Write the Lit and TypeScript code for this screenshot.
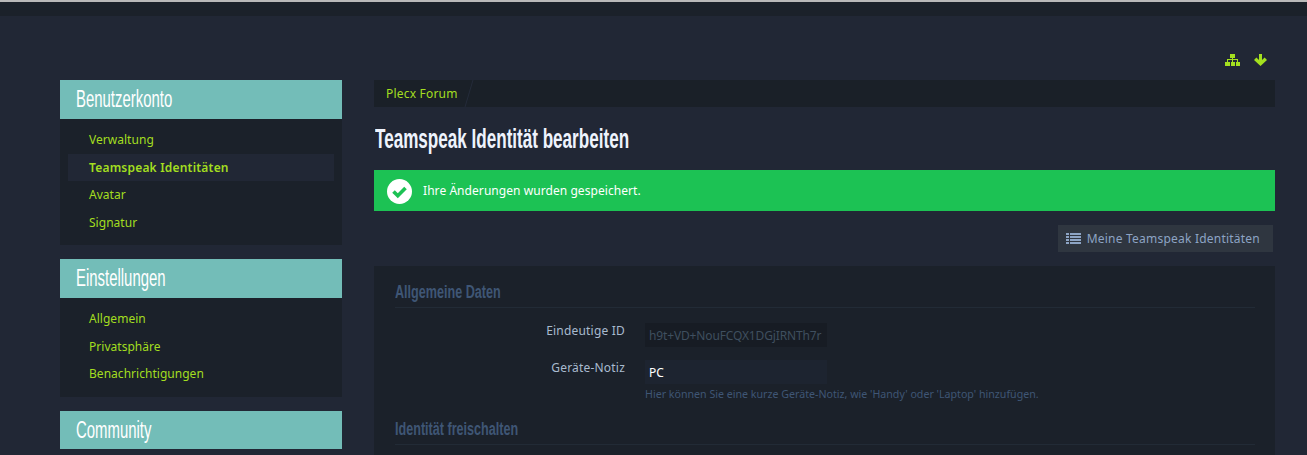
import { LitElement, html, css } from "lit";
import { customElement } from "lit/decorators.js";

const menus = [
  { title: "Benutzerkonto", items: ["Verwaltung", "Teamspeak Identitäten", "Avatar", "Signatur"], active: 1 },
  { title: "Einstellungen", items: ["Allgemein", "Privatsphäre", "Benachrichtigungen"], active: -1 },
  { title: "Community", items: [], active: -1 },
];

@customElement("app-root")
export class AppRoot extends LitElement {
  static styles = css`
    :host { display: block; height: 455px; overflow: hidden; background: #212735; font-family: "Noto Sans", sans-serif; font-size: 12px; color: #a9bbcf; }
    .chrome { height: 2px; background: #b9b9b9; }
    .topbar { height: 14px; background: #1b212a; }
    .wrap { padding: 0 32px 0 60px; }
    .tools { height: 64px; box-sizing: border-box; padding: 38px 8px 0 0; display: flex; justify-content: flex-end; gap: 14px; }
    .tools svg { display: block; }
    .cols { display: flex; gap: 32px; align-items: flex-start; }
    aside { width: 282px; flex: none; display: flex; flex-direction: column; gap: 14px; }
    .box { background: #1b212a; }
    .box h2 { margin: 0; height: 39px; background: #73bdb8; color: #fff; font: 400 23.5px/39px "Liberation Sans", sans-serif; padding-left: 16px; }
    .box.last h2 { height: 38px; line-height: 38px; }
    .cond { display: inline-block; white-space: nowrap; transform-origin: left center; }
    h2 .cond { transform: scaleX(.635); }
    h1 .cond { transform: scaleX(.61); }
    h3 .cond { transform: scaleX(.7); }
    .box ul { list-style: none; margin: 0; padding: 7px 8px 8.5px; }
    .box li { height: 27.67px; line-height: 27px; padding-left: 21px; color: #a3de20; font-size: 12px; letter-spacing: .03px; }
    .box li.on { background: #212735; font-weight: 600; letter-spacing: .2px; }
    main { flex: 1; min-width: 0; }
    .crumb { height: 27px; background: #1a2028; display: flex; }
    .crumb a { color: #a3de20; font-size: 12px; letter-spacing: .2px; line-height: 27px; padding: 0 12px; }
    .crumb svg { display: block; margin-left: -6px; }
    h1 { margin: 17px 0 16px; padding-left: 1px; height: 30px; font: 700 28px/30px "Liberation Sans", sans-serif; color: #eef3fd; }
    .ok { height: 41px; background: #1cc254; display: flex; align-items: center; gap: 11px; padding-left: 13px; color: #fff; font-size: 12px; letter-spacing: .06px; }
    .ok svg { display: block; margin-top: 2px; }
    .actions { display: flex; justify-content: flex-end; padding: 14px 2px 14px 0; }
    .btn { height: 27px; display: flex; align-items: center; gap: 6px; padding: 0 13px 0 8px; background: #2f3640; color: #8da4c4; font-size: 12px; letter-spacing: .22px; }
    .panel { background: #1b212a; padding: 14px 20px 0 21px; height: 300px; }
    h3 { margin: 0; height: 27px; border-bottom: 1px solid #222b36; font: 700 18px/24px "Liberation Sans", sans-serif; color: #3f5675; }
    .row { display: grid; grid-template-columns: 230px 182px; column-gap: 20px; }
    .row label { text-align: right; color: #a9bbcf; font-size: 12px; letter-spacing: .2px; line-height: 16px; }
    .first { margin-top: 15px; }
    .second { margin-top: 13px; }
    .field { height: 24px; line-height: 25px; padding-left: 4px; overflow: hidden; white-space: nowrap; font-size: 12px; letter-spacing: -.14px; }
    .ro { background: #171c24; color: #3f4f5f; }
    .ed { background: #1d2430; color: #fff; letter-spacing: 0; }
    .hint { margin: 3px 0 16px 250px; font-size: 10.65px; line-height: 14px; color: #3f5675; }
  `;

  render() {
    return html`
      <div class="chrome"></div>
      <div class="topbar"></div>
      <div class="wrap">
        <div class="tools">
          <svg width="15" height="12" viewBox="0 0 15 12" fill="#a4e01f"><rect x="5" y="0" width="5" height="4"/><path d="M7 4h1v1h5v3h-1V6H8v2H7V6H3v2H2V5h5z"/><rect x="0" y="8" width="5" height="4"/><rect x="6" y="8" width="4" height="4"/><rect x="11" y="8" width="4" height="4"/></svg>
          <svg width="13" height="12" viewBox="0 0 13 12" fill="#a4e01f"><path d="M5 0h3v6l2.600-2.400L13 6l-6.500 6L0 6l2.400-2.400L5 6z"/></svg>
        </div>
        <div class="cols">
          <aside>
            ${menus.map((m, mi) => html`
              <section class="box ${mi === 2 ? "last" : ""}">
                <h2><span class="cond">${m.title}</span></h2>
                ${m.items.length ? html`<ul>${m.items.map((it, i) => html`<li class="${i === m.active ? "on" : ""}">${it}</li>`)}</ul>` : ""}
              </section>`)}
          </aside>
          <main>
            <div class="crumb"><a>Plecx Forum</a><svg width="10" height="27" viewBox="0 0 10 27"><path d="M9 0 1 27" stroke="#242b3a" fill="none"/></svg></div>
            <h1><span class="cond">Teamspeak Identität bearbeiten</span></h1>
            <div class="ok">
              <svg width="25" height="25" viewBox="0 0 25 25"><circle cx="12.500" cy="12.500" r="12.500" fill="#fff"/><path d="M6.500 12.500l4.300 4.300L18.500 9" fill="none" stroke="#1cc254" stroke-width="3.600"/></svg>
              <span>Ihre Änderungen wurden gespeichert.</span>
            </div>
            <div class="actions">
              <div class="btn">
                <svg width="15" height="11" viewBox="0 0 15 11" fill="#8da4c4"><path d="M0 0h3v2H0zM4 0h11v2H4zM0 3h3v2H0zM4 3h11v2H4zM0 6h3v2H0zM4 6h11v2H4zM0 9h3v2H0zM4 9h11v2H4z"/></svg>
                <span>Meine Teamspeak Identitäten</span>
              </div>
            </div>
            <div class="panel">
              <h3><span class="cond">Allgemeine Daten</span></h3>
              <div class="row first"><label>Eindeutige ID</label><div class="field ro">h9t+VD+NouFCQX1DGjIRNTh7r</div></div>
              <div class="row second"><label>Geräte-Notiz</label><div class="field ed">PC</div></div>
              <div class="hint">Hier können Sie eine kurze Geräte-Notiz, wie 'Handy' oder 'Laptop' hinzufügen.</div>
              <h3><span class="cond">Identität freischalten</span></h3>
            </div>
          </main>
        </div>
      </div>
    `;
  }
}
